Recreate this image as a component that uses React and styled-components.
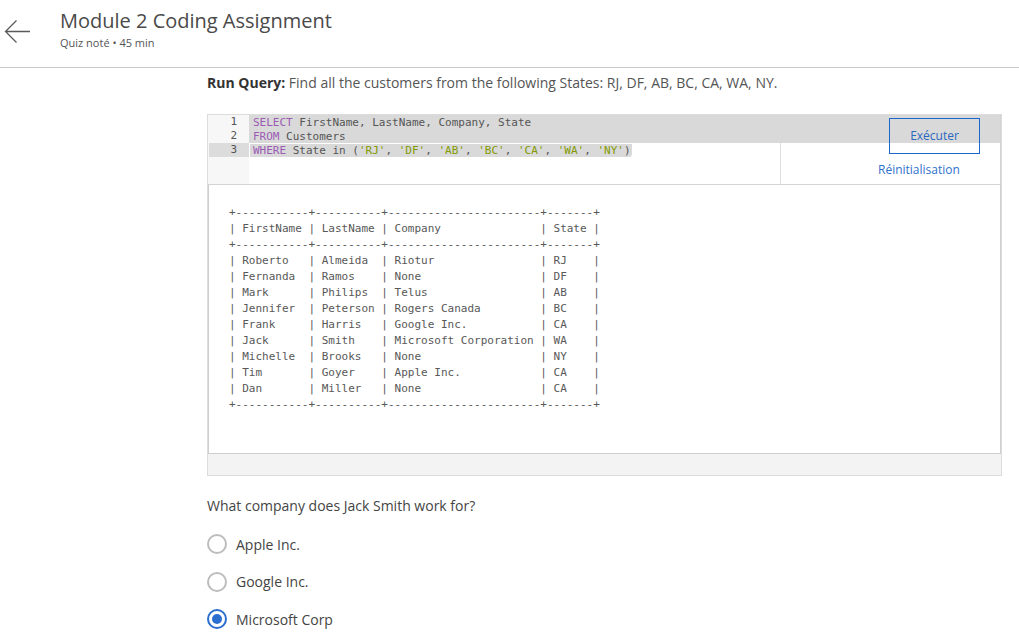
import React from "react";
import styled, { createGlobalStyle } from "styled-components";

const GlobalStyle = createGlobalStyle`
  html, body {
    margin: 0;
    padding: 0;
    background: #ffffff;
    font-family: "Open Sans", "Liberation Sans", Arial, sans-serif;
    color: #444;
  }
  * { box-sizing: border-box; }
`;

// Header
const Header = styled.header`
  display: flex;
  align-items: flex-start;
  height: 68px;
  border-bottom: 1px solid #c8c8c8;
`;

const BackButton = styled.button`
  width: 56px;
  height: 50px;
  padding: 18px 0 0 4px;
  border: none;
  background: none;
  display: flex;
  align-items: flex-start;
  cursor: pointer;
`;

const TitleBlock = styled.div`
  padding-top: 8px;
  padding-left: 4px;
`;

const Title = styled.h1`
  margin: 0;
  font-size: 20px;
  line-height: 26px;
  font-weight: 400;
  color: #4a4a4a;
`;

const Subtitle = styled.div`
  margin-top: 1px;
  font-size: 11px;
  line-height: 16px;
  color: #555;
`;

// Body
const Main = styled.main`
  margin-left: 207px;
  width: 795px;
  padding-top: 5px;
`;

const Prompt = styled.p`
  margin: 0 0 21px;
  font-size: 14px;
  line-height: 20px;
  color: #555;

  strong {
    color: #333;
    font-weight: 700;
  }
`;

const Workspace = styled.div`
  border: 1px solid #dcdcdc;
  background: #f3f3f3;
`;

const Editor = styled.div`
  position: relative;
  display: flex;
  height: 70px;
  background: #fff;
  border-bottom: 1px solid #d4d4d4;
  border-right: 1px solid #d4d4d4;
  font-family: "DejaVu Sans Mono", "Liberation Mono", monospace;
  font-size: 11px;
`;

const Gutter = styled.div`
  width: 41px;
  padding-left: 1px;
  background: #f7f7f7;
`;

const GutterLine = styled.div`
  height: 14px;
  line-height: 14px;
  text-align: right;
  padding-right: 12px;
  color: #555;
  background: ${(p) => (p.$active ? "#dcdcdc" : "transparent")};
`;

const Code = styled.div`
  flex: 1;
`;

const CodeLine = styled.div`
  height: 14px;
  line-height: 15px;
  padding-left: 4px;
  color: #555;
  white-space: pre;
  background: ${(p) => (p.$fullSelect ? "#d9d9d9" : "transparent")};
`;

const Selected = styled.span`
  background: #d9d9d9;
  margin-left: -3px;
  padding: 0 1px 0 3px;
  border-radius: 0 0 3px 0;
`;

const Keyword = styled.span`
  color: #9b5bb5;
`;

const Str = styled.span`
  color: #829a00;
`;

const RunPanel = styled.div`
  position: absolute;
  top: 0;
  right: 0;
  width: 220px;
  height: 100%;
  display: flex;
  flex-direction: column;
  align-items: flex-start;
  font-family: "Open Sans", "Liberation Sans", Arial, sans-serif;

  &::before {
    content: "";
    position: absolute;
    left: 0;
    top: 28px;
    bottom: 0;
    width: 1px;
    background: #dedede;
  }
`;

const RunButton = styled.button`
  margin-top: 3px;
  margin-left: 109px;
  width: 91px;
  height: 36px;
  padding: 0;
  border: 1px solid #1d66cc;
  background: transparent;
  color: #2a68c0;
  font-family: inherit;
  font-size: 12px;
  line-height: 16px;
  cursor: pointer;
`;

const ResetLink = styled.a`
  margin-top: 8px;
  margin-left: 98px;
  color: #2f72cc;
  font-size: 12px;
  line-height: 16px;
  text-decoration: none;
  cursor: pointer;
`;

const Output = styled.pre`
  margin: 0;
  height: 269px;
  padding: 20px 20px;
  background: #fff;
  border-left: 1px solid #cfcfcf;
  border-right: 1px solid #cfcfcf;
  border-bottom: 1px solid #cfcfcf;
  font-family: "DejaVu Sans Mono", "Liberation Mono", monospace;
  font-size: 11px;
  line-height: 16px;
  color: #585858;
`;

const WorkspaceFooter = styled.div`
  height: 21px;
`;

const Question = styled.p`
  margin: 20px 0 18px;
  font-size: 14px;
  line-height: 20px;
  color: #444;
`;

const Options = styled.div`
  display: flex;
  flex-direction: column;
  gap: 17.5px;
`;

const Option = styled.label`
  display: flex;
  align-items: center;
  gap: 9px;
  height: 20px;
  font-size: 14px;
  color: #444;
  cursor: pointer;
`;

const Radio = styled.span`
  width: 20px;
  height: 20px;
  border-radius: 50%;
  border: 2px solid ${(p) => (p.$checked ? "#2a6fcf" : "#bdbdbd")};
  display: flex;
  align-items: center;
  justify-content: center;

  &::after {
    content: "";
    width: 10px;
    height: 10px;
    border-radius: 50%;
    background: ${(p) => (p.$checked ? "#2a6fcf" : "transparent")};
  }
`;

const tableText = `+-----------+----------+-----------------------+-------+
| FirstName | LastName | Company               | State |
+-----------+----------+-----------------------+-------+
| Roberto   | Almeida  | Riotur                | RJ    |
| Fernanda  | Ramos    | None                  | DF    |
| Mark      | Philips  | Telus                 | AB    |
| Jennifer  | Peterson | Rogers Canada         | BC    |
| Frank     | Harris   | Google Inc.           | CA    |
| Jack      | Smith    | Microsoft Corporation | WA    |
| Michelle  | Brooks   | None                  | NY    |
| Tim       | Goyer    | Apple Inc.            | CA    |
| Dan       | Miller   | None                  | CA    |
+-----------+----------+-----------------------+-------+`;

const states = ["RJ", "DF", "AB", "BC", "CA", "WA", "NY"];

const options = [
  { label: "Apple Inc.", checked: false },
  { label: "Google Inc.", checked: false },
  { label: "Microsoft Corp", checked: true },
];

export default function App() {
  return (
    <>
      <GlobalStyle />
      <Header>
        <BackButton aria-label="Retour">
          <svg width="28" height="28" viewBox="0 0 28 28" fill="none">
            <path d="M26 13.5H1.5M12.5 2.5L1.5 13.5L12.5 24.5" stroke="#5a5a5a" strokeWidth="1.3" />
          </svg>
        </BackButton>
        <TitleBlock>
          <Title>Module 2 Coding Assignment</Title>
          <Subtitle>Quiz noté • 45 min</Subtitle>
        </TitleBlock>
      </Header>

      <Main>
        <Prompt>
          <strong>Run Query:</strong> Find all the customers from the following States: RJ, DF, AB, BC, CA, WA, NY.
        </Prompt>

        <Workspace>
          <Editor>
            <Gutter>
              <GutterLine>1</GutterLine>
              <GutterLine>2</GutterLine>
              <GutterLine $active>3</GutterLine>
            </Gutter>
            <Code>
              <CodeLine $fullSelect>
                <Keyword>SELECT</Keyword> FirstName, LastName, Company, State
              </CodeLine>
              <CodeLine $fullSelect>
                <Keyword>FROM</Keyword> Customers
              </CodeLine>
              <CodeLine>
                <Selected>
                  <Keyword>WHERE</Keyword> State in (
                  {states.map((s, i) => (
                    <React.Fragment key={s}>
                      <Str>'{s}'</Str>
                      {i < states.length - 1 ? ", " : ""}
                    </React.Fragment>
                  ))}
                  )
                </Selected>
              </CodeLine>
            </Code>
            <RunPanel>
              <RunButton>Exécuter</RunButton>
              <ResetLink>Réinitialisation</ResetLink>
            </RunPanel>
          </Editor>
          <Output>{tableText}</Output>
          <WorkspaceFooter />
        </Workspace>

        <Question>What company does Jack Smith work for?</Question>
        <Options>
          {options.map((o) => (
            <Option key={o.label}>
              <Radio $checked={o.checked} />
              {o.label}
            </Option>
          ))}
        </Options>
      </Main>
    </>
  );
}
